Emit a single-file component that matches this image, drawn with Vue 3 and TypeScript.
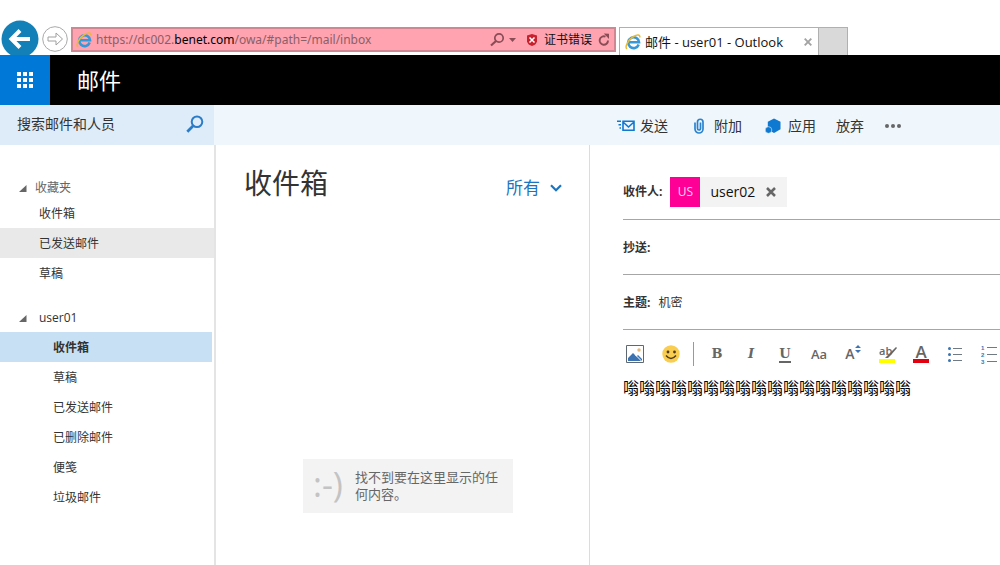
<script setup lang="ts">
import { ref } from 'vue'

interface Folder {
  name: string
  state?: 'hover' | 'active'
}

const favorites: Folder[] = [
  { name: '收件箱' },
  { name: '已发送邮件', state: 'hover' },
  { name: '草稿' },
]

const folders: Folder[] = [
  { name: '收件箱', state: 'active' },
  { name: '草稿' },
  { name: '已发送邮件' },
  { name: '已删除邮件' },
  { name: '便笺' },
  { name: '垃圾邮件' },
]

const cc = ref('')
const subject = ref('机密')
const message = ref('嗡'.repeat(18))
</script>

<template>
  <div class="window">
    <div class="chrome">
      <button class="back" aria-label="后退">
        <svg width="38" height="38" viewBox="0 0 38 38">
          <circle cx="19" cy="19" r="18.5" fill="#1380b8" />
          <path d="M29 19H11M19 10.500L10.500 19l8.500 8.500" fill="none" stroke="#fff" stroke-width="4" />
        </svg>
      </button>
      <button class="forward" aria-label="前进">
        <svg width="26" height="26" viewBox="0 0 26 26">
          <circle cx="13" cy="13" r="12.300" fill="#fff" stroke="#a9a9a9" />
          <path d="M6 11h8V7L20.500 13 14 19v-4H6z" fill="#fff" stroke="#a0a0a0" />
        </svg>
      </button>
      <div class="address">
        <svg class="ie" width="16" height="16" viewBox="0 0 16 16">
          <path d="M13.700 10.500A5.400 5.400 0 1 1 14 8.200H4.500" fill="none" stroke="#3598d8" stroke-width="2.600" />
          <path d="M2 15C-.8 13 3.500 5.500 8.500 2.500 12 .4 15.300.3 14.800 3.500" fill="none" stroke="#e9bb35" stroke-width="1.500" />
        </svg>
        <span class="url">https://dc002.<b>benet.com</b>/owa/#path=/mail/inbox</span>
        <button aria-label="搜索" class="tool">
          <svg width="28" height="16" viewBox="0 0 28 16">
            <circle cx="10" cy="6" r="4.200" fill="none" stroke="#8a4c55" stroke-width="1.700" />
            <path d="M7 9L2 13.500" stroke="#8a4c55" stroke-width="2.200" />
            <path d="M20 6h7l-3.500 4z" fill="#8a4c55" />
          </svg>
        </button>
        <button class="cert">
          <svg width="12" height="14" viewBox="0 0 12 14">
            <path d="M6 1l5 1.500v6Q10 12 6 13 2 12 1 8.500v-6z" fill="#c8202d" />
            <path d="M3.500 4.500l5 5M8.500 4.500l-5 5" stroke="#fff" stroke-width="1.500" />
          </svg>
          证书错误
        </button>
        <button aria-label="刷新" class="tool">
          <svg width="12" height="14" viewBox="0 0 12 14">
            <path d="M10 7.500A4.200 4.200 0 1 1 7.500 3.700" fill="none" stroke="#8a4c55" stroke-width="1.900" />
            <path d="M5.800.5L11 .8V6z" fill="#8a4c55" />
          </svg>
        </button>
      </div>
      <div class="tab">
        <svg width="16" height="16" viewBox="0 0 16 16">
          <path d="M13.700 10.500A5.400 5.400 0 1 1 14 8.200H4.500" fill="none" stroke="#3598d8" stroke-width="2.600" />
          <path d="M2 15C-.8 13 3.500 5.500 8.500 2.500 12 .4 15.300.3 14.800 3.500" fill="none" stroke="#e9bb35" stroke-width="1.500" />
        </svg>
        <span class="tab-title">邮件 - user01 - Outlook</span>
        <button aria-label="关闭选项卡">
          <svg width="8" height="8" viewBox="0 0 8 8">
            <path d="M.7.7l6.600 6.600M7.300.7L.7 7.300" stroke="#a3a3a3" stroke-width="1.900" />
          </svg>
        </button>
      </div>
      <button class="new-tab" aria-label="新建选项卡"></button>
    </div>

    <header class="suite">
      <button class="launcher" aria-label="应用启动器">
        <svg width="16" height="16" viewBox="0 0 16 16" fill="#fff">
          <path d="M0 0h4v4H0zM6 0h4v4H6zM12 0h4v4h-4zM0 6h4v4H0zM6 6h4v4H6zM12 6h4v4h-4zM0 12h4v4H0zM6 12h4v4H6zM12 12h4v4h-4z" />
        </svg>
      </button>
      <h1>邮件</h1>
    </header>

    <div class="commands">
      <div class="search">
        <input type="text" placeholder="搜索邮件和人员" aria-label="搜索邮件和人员" />
        <button aria-label="搜索">
          <svg width="18" height="18" viewBox="0 0 18 18" fill="none" stroke="#2b7cc7">
            <circle cx="11" cy="6.700" r="5.300" stroke-width="2" />
            <path d="M7.200 10.800L1.300 16.700" stroke-width="2.800" />
          </svg>
        </button>
      </div>
      <div class="actions">
        <button>
          <svg width="18" height="12" viewBox="0 0 18 12" fill="none" stroke="#0f78d0" stroke-width="1.600">
            <path d="M6 1.300h11v9H6zM6 2l5.500 5L17 2" />
            <path d="M0 1.300h4M1.500 4.700H4M2.500 8H4" />
          </svg>
          发送
        </button>
        <button class="attach">
          <svg width="10" height="16" viewBox="0 0 10 16" fill="none" stroke="#2b83cf" stroke-width="1.700">
            <path d="M6.500 4.500v6a1.300 1.300 0 0 1-3 0V4a2.700 2.700 0 0 1 5.500 0v7a4 4 0 0 1-8 0V4.500" />
          </svg>
          附加
        </button>
        <button class="apps">
          <svg width="16" height="16" viewBox="0 0 16 16" fill="#0f78d0">
            <path d="M9 .5l6.500 3.300v7.500L9 15 2.800 11.500V3.800z" />
            <circle cx="3.500" cy="12" r="3.300" stroke="#eff6fc" stroke-width=".6" />
          </svg>
          应用
        </button>
        <button>放弃</button>
        <button aria-label="更多">
          <svg width="18" height="4" viewBox="0 0 18 4" fill="#666">
            <circle cx="3" cy="2" r="2" /><circle cx="9" cy="2" r="2" /><circle cx="15" cy="2" r="2" />
          </svg>
        </button>
      </div>
    </div>

    <div class="panes">
      <nav class="sidebar">
        <h2 class="group muted">
          <svg width="8" height="7" viewBox="0 0 8 7"><path d="M7.500 0v7H0z" fill="#666" /></svg>
          收藏夹
        </h2>
        <ul class="favorites">
          <li v-for="f in favorites" :key="f.name"><a href="#" :class="f.state">{{ f.name }}</a></li>
        </ul>
        <h2 class="group account">
          <svg width="8" height="7" viewBox="0 0 8 7"><path d="M7.500 0v7H0z" fill="#666" /></svg>
          user01
        </h2>
        <ul class="folders">
          <li v-for="f in folders" :key="f.name"><a href="#" :class="f.state">{{ f.name }}</a></li>
        </ul>
      </nav>

      <section class="list">
        <div class="list-head">
          <h2>收件箱</h2>
          <button class="filter">
            所有
            <svg width="12" height="8" viewBox="0 0 12 8">
              <path d="M1 1.300l5 5 5-5" fill="none" stroke="#1b74bf" stroke-width="2.200" />
            </svg>
          </button>
        </div>
        <div class="empty">
          <span class="face">:-)</span>
          <p>找不到要在这里显示的任何内容。</p>
        </div>
      </section>

      <main class="compose">
        <div class="field first">
          <span class="label">收件人:</span>
          <div class="chip">
            <span class="avatar">US</span>
            <span class="person">user02</span>
            <button aria-label="删除 user02">
              <svg width="10" height="10" viewBox="0 0 10 10">
                <path d="M1 1l8 8M9 1L1 9" stroke="#666" stroke-width="2.500" />
              </svg>
            </button>
          </div>
        </div>
        <div class="field">
          <label for="cc" class="label">抄送:</label>
          <input id="cc" v-model="cc" type="text" />
        </div>
        <div class="field">
          <label for="subject" class="label">主题:</label>
          <input id="subject" v-model="subject" type="text" />
        </div>
        <div class="format">
          <button class="media" aria-label="插入图片">
            <svg width="18" height="18" viewBox="0 0 18 18">
              <path d="M.5.500h17v17H.5z" fill="#fff" stroke="#5e6870" />
              <path d="M2 16v-3l5-5 3.500 3.500L12 10l4 4v2z" fill="#3c73b0" />
              <path d="M9.500 10l6 6" stroke="#fff" />
              <circle cx="13" cy="5" r="1.700" fill="#e7b77b" />
            </svg>
          </button>
          <button class="media" aria-label="插入表情">
            <svg width="18" height="18" viewBox="0 0 18 18">
              <circle cx="9" cy="9" r="8.700" fill="#f9cd50" />
              <circle cx="6" cy="7" r="1.400" fill="#4d3a20" /><circle cx="12.500" cy="7" r="1.400" fill="#4d3a20" />
              <path d="M4 10.500q5 6 10 0" fill="none" stroke="#4d3a20" stroke-width="1.400" />
            </svg>
          </button>
          <i class="separator"></i>
          <button class="slab" aria-label="加粗">B</button>
          <button class="slab italic" aria-label="倾斜">I</button>
          <button class="slab" aria-label="下划线"><span class="underline">U</span></button>
          <button class="letters" aria-label="字体">Aa</button>
          <button class="letters size" aria-label="字号">
            A
            <svg width="6" height="8" viewBox="0 0 6 8" fill="#3c73b0"><path d="M3 0l3 3H0zM3 8L0 5h6z" /></svg>
          </button>
          <button class="letters swatch yellow" aria-label="突出显示">
            <span>ab</span>
            <svg width="12" height="12" viewBox="0 0 12 12"><path d="M11 0l1 1-6 7-3 3H0l3-3z" fill="#666" /></svg>
          </button>
          <button class="letters swatch red" aria-label="字体颜色"><span>A</span></button>
          <button aria-label="项目符号">
            <svg width="14" height="16" viewBox="0 0 14 16">
              <path d="M5 2.500h9M5 8.500h9M5 14.500h9" stroke="#6f7a84" />
              <g fill="#3c73b0"><circle cx="1.500" cy="2.500" r="1.500" /><circle cx="1.500" cy="8.500" r="1.500" /><circle cx="1.500" cy="14.500" r="1.500" /></g>
            </svg>
          </button>
          <button aria-label="编号">
            <svg width="16" height="22" viewBox="0 0 16 22">
              <path d="M6 4.500h10M6 11.500h10M6 18.500h10" stroke="#6f7a84" />
              <g class="digits" fill="#3c73b0">
                <text x="0" y="7">1</text><text x="0" y="14">2</text><text x="0" y="21">3</text>
              </g>
            </svg>
          </button>
        </div>
        <textarea v-model="message" aria-label="邮件正文" spellcheck="false"></textarea>
      </main>
    </div>
  </div>
</template>

<style>
body {
  margin: 0;
  overflow: hidden;
}
</style>

<style scoped>
* {
  box-sizing: border-box;
}

.window {
  display: flex;
  flex-direction: column;
  min-height: 100vh;
  background: #fff;
  color: #333;
  font: 12px/18px 'Open Sans', 'Noto Sans CJK SC', sans-serif;
}

button,
input,
textarea {
  margin: 0;
  padding: 0;
  border: 0;
  background: none;
  color: inherit;
  font: inherit;
  outline: none;
}

button {
  display: flex;
  align-items: center;
  white-space: nowrap;
}

svg {
  display: block;
  flex: none;
}

h1,
h2,
p,
ul {
  margin: 0;
  padding: 0;
  font-weight: 400;
  list-style: none;
}

a {
  color: inherit;
  text-decoration: none;
}

.chrome {
  display: flex;
  align-items: flex-end;
  height: 55px;
  padding-left: 1px;
}

.back {
  height: 35px;
  align-items: flex-start;
  overflow: hidden;
}

.forward {
  margin: 0 3px 3px;
}

.address {
  display: flex;
  align-items: center;
  flex: 0 1 545px;
  height: 25px;
  margin-bottom: 3px;
  padding: 0 4px 0 3px;
  border: 2px solid #cf8791;
  background: #ffa3b1;
}

.url {
  flex: 1;
  margin-left: 4px;
  color: #8a5f66;
  font-family: 'Noto Sans', sans-serif;
  white-space: nowrap;
}

.url b {
  color: #000;
  font-weight: 400;
}

.cert {
  gap: 6px;
  margin: 0 6px 0 9px;
  color: #111;
}

.tab {
  display: flex;
  align-items: center;
  flex: 0 1 200px;
  height: 28px;
  margin-left: 3px;
  padding: 0 6px 0 5px;
  border: 1px solid #b0b0b0;
  border-bottom: 0;
  color: #111;
}

.tab-title {
  flex: 1;
  margin-left: 4px;
  font-size: 13px;
  white-space: nowrap;
}

.new-tab {
  width: 29px;
  height: 28px;
  border: 1px solid #b0b0b0;
  border-left: 0;
  border-bottom: 0;
  background: #d9d9d9;
}

.suite {
  display: flex;
  align-items: center;
  height: 50px;
  background: #000;
  color: #fff;
}

.launcher {
  justify-content: center;
  width: 50px;
  height: 50px;
  background: #0078d7;
}

.suite h1 {
  margin-left: 27px;
  font-size: 22px;
  line-height: 32px;
}

.commands {
  display: flex;
  height: 40px;
  background: #eff6fc;
  font-size: 14px;
}

.search {
  display: flex;
  align-items: center;
  flex: 0 0 214px;
  min-width: 0;
  padding: 0 10px 2px 17px;
  background: #deecf9;
}

.search input {
  flex: 1;
  width: 0;
  min-width: 0;
}

.search input::placeholder {
  color: #333;
  opacity: 1;
}

.actions {
  display: flex;
  align-items: center;
  gap: 20px;
  margin-left: 403px;
  padding-top: 2px;
}

.actions button {
  gap: 5px;
}

.actions .attach {
  gap: 10px;
  margin-left: 6px;
}

.actions .apps {
  gap: 7px;
  margin-left: 3px;
}

.panes {
  display: grid;
  flex: 1;
  grid-template-columns: 216px 374px 1fr;
}

.sidebar {
  padding-top: 31px;
  border-right: 2px solid #e4e4e4;
}

.group {
  display: flex;
  align-items: center;
  gap: 12px;
  height: 30px;
  padding-top: 2px;
  padding-left: 19px;
  font-size: 12px;
}

.group.muted {
  gap: 8px;
  height: 22px;
  color: #666;
}

.account {
  margin-top: 14px;
}

.sidebar a {
  display: block;
  margin-right: 2px;
  padding-top: 2px;
  padding-left: 39px;
  line-height: 28px;
}

.sidebar .folders a {
  padding-left: 53px;
}

.sidebar .hover {
  margin-right: 0;
  background: #e9e9e9;
}

.sidebar .active {
  background: #c7e0f4;
  font-weight: 700;
}

.list {
  display: flex;
  flex-direction: column;
  border-right: 1px solid #dcdcdc;
}

.list-head {
  display: flex;
  align-items: center;
  justify-content: space-between;
  padding: 18px 27px 0 28px;
}

.list-head h2 {
  font-size: 28px;
  line-height: 40px;
}

.filter {
  gap: 10px;
  margin-top: 10px;
  color: #1b74bf;
  font-size: 17px;
  line-height: 24px;
}

.empty {
  display: flex;
  align-items: center;
  width: 210px;
  height: 54px;
  margin: auto 76px 52px auto;
  padding: 0 10px;
  background: #f3f3f3;
  color: #666;
  font-size: 13px;
  line-height: 17px;
}

.face {
  flex: 0 0 42px;
  padding-bottom: 4px;
  color: #c3c3c3;
  font-size: 34px;
  line-height: 36px;
  white-space: nowrap;
}

.compose {
  display: flex;
  flex-direction: column;
  min-width: 0;
  padding-left: 33px;
}

.field {
  display: flex;
  align-items: center;
  height: 55px;
  padding-top: 2px;
  border-bottom: 1px solid #a6a6a6;
}

.field.first {
  height: 75px;
  padding-top: 20px;
}

.label {
  font-weight: 700;
  white-space: nowrap;
}

.field input {
  flex: 1;
  min-width: 0;
  margin-left: 8px;
}

.chip {
  display: flex;
  align-items: center;
  height: 30px;
  margin-left: 8px;
  padding-right: 11px;
  background: #f3f3f3;
  color: #111;
}

.avatar {
  width: 30px;
  background: #ff0097;
  color: #ffd6ee;
  line-height: 30px;
  text-align: center;
}

.person {
  margin: 0 11px 0 10px;
  font-size: 14px;
}

.format {
  display: flex;
  align-items: center;
  height: 48px;
  padding-left: 3px;
  overflow: hidden;
  color: #666;
}

.format button {
  flex: 0 0 34px;
  justify-content: center;
}

.format .media {
  flex-basis: 18px;
  margin-right: 18px;
}

.separator {
  flex: none;
  width: 1px;
  height: 24px;
  margin: 0 6px 0 -5px;
  background: #999;
}

.format .slab {
  font: 700 13px/20px 'DejaVu Serif', serif;
}

.format .italic {
  font-style: italic;
}

.underline {
  height: 18px;
  border-bottom: 2px solid #666;
  line-height: 18px;
}

.format .letters {
  font-size: 13px;
  font-weight: 600;
}

.format .size {
  align-items: flex-start;
  font-size: 14px;
}

.swatch span {
  width: 16px;
  height: 17px;
  border-bottom: 4px solid #e3000f;
  font-size: 17px;
  line-height: 12px;
  text-align: center;
}

.format .yellow {
  position: relative;
}

.yellow span {
  border-color: #ff0;
  font-size: 11px;
  line-height: 9px;
  text-align: left;
}

.yellow svg {
  position: absolute;
  top: 1px;
  right: 7px;
}

.digits {
  font: 700 6px 'Liberation Sans', sans-serif;
}

textarea {
  flex: 1;
  min-height: 48px;
  color: #000;
  font-size: 16px;
  line-height: 20px;
  resize: none;
}
</style>
